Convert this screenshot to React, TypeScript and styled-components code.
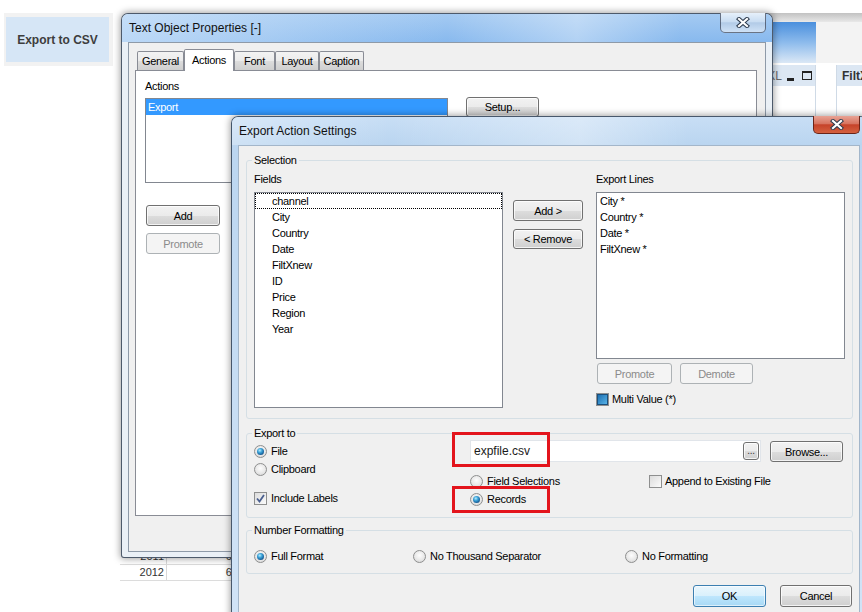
import React from "react";
import styled, { createGlobalStyle, css } from "styled-components";

const uiFont = `"Liberation Sans", Arial, sans-serif`;
const titleFont = `"Liberation Sans", Arial, sans-serif`;

const GlobalStyle = createGlobalStyle`
  * { box-sizing: border-box; }
  html, body { margin: 0; padding: 0; background: #ffffff; }
  body { font-family: ${titleFont}; }
`;

const Desktop = styled.div`
  position: relative;
  width: 862px;
  height: 612px;
  overflow: hidden;
  background: #ffffff;
  display: flex;
  flex-direction: column;
  align-items: flex-start;
`;

const CsvButtonFrame = styled.div`
  margin: 13px 0 0 4px;
  width: 109px;
  height: 53px;
  padding: 4px 4px 4px 2px;
  background: #f2f2f2;
`;

const CsvButton = styled.div`
  height: 100%;
  display: flex;
  align-items: center;
  justify-content: center;
  background: #d6e6f6;
  color: #3d3d3d;
  font: bold 12px ${titleFont};
`;

/* sheet objects of the app behind the dialogs, placed freely on the sheet */
const SheetObject = styled.div<{ $x: number; $y: number; $w: number; $h: number }>`
  position: absolute;
  left: ${(p) => p.$x}px;
  top: ${(p) => p.$y}px;
  width: ${(p) => p.$w}px;
  height: ${(p) => p.$h}px;
`;

const SheetTabs = styled(SheetObject)`
  background: linear-gradient(#c2c2c2, #e8e8e8);
`;

const BlueTile = styled(SheetObject)`
  background: linear-gradient(#4a8fdd, #8dbbec 50%, #dbe8f6);
`;

const PaleTile = styled(SheetObject)`
  background: #f3f3f3;
`;

const ChartBox = styled(SheetObject)`
  display: flex;
  flex-direction: column;
  border: 1px solid #cfdae6;
  border-top: none;
  background: #ffffff;
`;

const ChartCaption = styled.div<{ $align: "start" | "end" }>`
  height: 21px;
  display: flex;
  align-items: center;
  justify-content: ${(p) => (p.$align === "end" ? "flex-end" : "flex-start")};
  gap: 5px;
  padding: 0 3px 0 5px;
  background: #dce7f3;
  color: #6a6a6a;
  font: 12px ${titleFont};
`;

const CaptionTitle = styled.span`
  color: #333333;
  font-weight: bold;
`;

const MinimizeIcon = styled.span`
  width: 7px;
  height: 3px;
  margin-top: 7px;
  background: #222;
`;

const MaximizeIcon = styled.span`
  width: 10px;
  height: 9px;
  margin-left: 3px;
  border: 1px solid #222;
  border-top-width: 2px;
`;

const SheetTable = styled(SheetObject)`
  display: flex;
  flex-direction: column;
  font: 11px ${titleFont};
  color: #333333;
`;

const TableRow = styled.div`
  display: grid;
  grid-template-columns: 47px 73px;
  height: 16px;
  border-bottom: 1px solid #dcdcdc;
`;

const TableCell = styled.div`
  text-align: right;
  padding-right: 2px;
  line-height: 15px;
  &:first-child {
    border-right: 1px solid #d8d8d8;
  }
`;

/* windows */
const Window = styled.div<{ $x: number; $y: number; $w: number; $h: number; $z: number; $frame: string }>`
  position: absolute;
  left: ${(p) => p.$x}px;
  top: ${(p) => p.$y}px;
  width: ${(p) => p.$w}px;
  height: ${(p) => p.$h}px;
  z-index: ${(p) => p.$z};
  display: flex;
  flex-direction: column;
  padding: 0 6px 5px 6px;
  border: 1px solid rgba(38, 52, 72, 0.8);
  border-radius: 7px 7px 3px 3px;
  background: ${(p) => p.$frame};
  box-shadow: 0 0 7px 1px rgba(0, 0, 0, 0.36);
`;

const TitleBar = styled.div<{ $glass: string }>`
  flex: none;
  height: 28px;
  margin: 0 -6px;
  padding: 0 6px 0 7px;
  display: flex;
  align-items: center;
  background: ${(p) => p.$glass};
  border-radius: 6px 6px 0 0;
`;

const TitleText = styled.span`
  font: 12px ${titleFont};
  color: #111111;
`;

const CloseButton = styled.div<{ $tone: "glass" | "red"; $w: number; $h: number }>`
  margin: -1px 0 0 auto;
  align-self: flex-start;
  width: ${(p) => p.$w}px;
  height: ${(p) => p.$h}px;
  display: flex;
  align-items: center;
  justify-content: center;
  border: 1px solid rgba(40, 50, 70, 0.65);
  border-top: none;
  border-radius: 0 0 5px 5px;
  ${(p) =>
    p.$tone === "red"
      ? css`
          background: linear-gradient(#e8a395, #d77460 45%, #c6432a 52%, #d4603f 100%);
          border-color: #6a2418;
        `
      : css`
          background: linear-gradient(#e6f0fa, #c9ddf2 45%, #b2cbe7 52%, #cfe2f6 100%);
        `}
`;

const CloseGlyph = () => (
  <svg width="14" height="11" viewBox="0 0 14 11">
    <path d="M3 2 L11 9 M11 2 L3 9" stroke="#2c3a4d" strokeWidth="4.2" strokeLinecap="square" />
    <path d="M3 2 L11 9 M11 2 L3 9" stroke="#ffffff" strokeWidth="2.2" strokeLinecap="square" />
  </svg>
);

const Client = styled.div`
  flex: 1;
  min-height: 0;
  display: flex;
  flex-direction: column;
  background: #f0f0f0;
  border: 1px solid #8e9aa8;
  font: 11px ${uiFont};
  letter-spacing: -0.3px;
  color: #000000;
`;

const PropertiesClient = styled(Client)`
  padding: 6px 8px 0 6px;
`;

const ExportClient = styled(Client)`
  padding: 7px 6px 0 7px;
  border-color: #a3b6ca;
`;

/* tabs */
const TabStrip = styled.div`
  display: flex;
  align-items: flex-end;
  height: 21px;
  margin-left: 2px;
  position: relative;
  z-index: 1;
`;

const Tab = styled.div<{ $w: number; $active?: boolean }>`
  width: ${(p) => p.$w}px;
  height: ${(p) => (p.$active ? 22 : 19)}px;
  margin-bottom: ${(p) => (p.$active ? -1 : 0)}px;
  display: flex;
  align-items: center;
  justify-content: center;
  border: 1px solid #898c95;
  border-bottom: none;
  border-radius: 2px 2px 0 0;
  background: ${(p) =>
    p.$active ? "#ffffff" : "linear-gradient(#f3f3f3, #ebebeb 50%, #dddddd 51%, #cfcfcf)"};
  padding-bottom: ${(p) => (p.$active ? 2 : 0)}px;
`;

const TabPanel = styled.div`
  height: 446px;
  display: flex;
  flex-direction: column;
  align-items: flex-start;
  padding: 8px 9px;
  border: 1px solid #898c95;
  background: #ffffff;
`;

const FieldLabel = styled.div`
  line-height: 14px;
`;

const ActionsRow = styled.div`
  display: flex;
  align-items: flex-start;
  gap: 18px;
  margin-top: 5px;
`;

const ActionButtons = styled.div`
  display: flex;
  flex-direction: column;
  gap: 7px;
  margin: 22px 0 0 1px;
`;

/* controls */
const Button = styled.button<{ $w: number; $h?: number; $default?: boolean }>`
  flex: none;
  width: ${(p) => p.$w}px;
  height: ${(p) => p.$h ?? 21}px;
  padding: 0;
  font: 11px ${uiFont};
  letter-spacing: -0.3px;
  color: #000000;
  border: 1px solid #707070;
  border-radius: 3px;
  background: linear-gradient(#f2f2f2 0%, #ebebeb 50%, #dddddd 51%, #cfcfcf 100%);
  box-shadow: inset 0 0 0 1px rgba(255, 255, 255, 0.75);
  &:disabled {
    color: #8b8b8b;
    border-color: #adb2b5;
    background: #f4f4f4;
    box-shadow: none;
  }
  ${(p) =>
    p.$default &&
    css`
      border-color: #3c7fb1;
      background: linear-gradient(#eaf6fd 0%, #d9f0fc 50%, #bee6fd 51%, #a7d9f5 100%);
      box-shadow: inset 0 0 0 1px rgba(255, 255, 255, 0.6);
    `}
`;

const SetupButton = styled(Button)`
  margin-top: -1px;
`;

const ListBox = styled.div<{ $w: number; $h: number }>`
  flex: none;
  width: ${(p) => p.$w}px;
  height: ${(p) => p.$h}px;
  display: flex;
  flex-direction: column;
  border: 1px solid #828790;
  background: #ffffff;
`;

const ListItem = styled.div<{ $indent: number; $selected?: boolean; $focused?: boolean }>`
  height: 16px;
  line-height: 14px;
  padding-left: ${(p) => p.$indent}px;
  border: 1px ${(p) => (p.$focused ? "dotted #000000" : "solid transparent")};
  ${(p) =>
    p.$selected &&
    css`
      background: #3399ff;
      color: #ffffff;
    `}
`;

const GroupBox = styled.fieldset<{ $pad: string; $gap?: number }>`
  margin: ${(p) => p.$gap ?? 0}px 0 0 0;
  min-width: 0;
  padding: ${(p) => p.$pad};
  border: 1px solid #d5dfe5;
  border-radius: 3px;
`;

const GroupLegend = styled.legend`
  padding: 0 2px;
  margin-left: -2px;
  line-height: 14px;
`;

const SelectionBody = styled.div`
  display: flex;
  align-items: flex-start;
`;

const ListColumn = styled.div<{ $gap?: number }>`
  display: flex;
  flex-direction: column;
  gap: 6px;
  margin-left: ${(p) => p.$gap ?? 0}px;
`;

const MoveButtons = styled.div`
  display: flex;
  flex-direction: column;
  gap: 8px;
  margin-left: 10px;
  padding-top: 28px;
`;

const OrderButtons = styled.div`
  display: flex;
  gap: 8px;
  margin: -2px 0 0 1px;
`;

const OptionRow = styled.label<{ $space?: number; $gap?: number }>`
  display: flex;
  align-items: center;
  gap: ${(p) => p.$gap ?? 4}px;
  height: 18px;
  margin-top: ${(p) => p.$space ?? 0}px;
  white-space: nowrap;
`;

const Radio = styled.span<{ $checked?: boolean }>`
  flex: none;
  width: 13px;
  height: 13px;
  display: flex;
  align-items: center;
  justify-content: center;
  border: 1px solid #8e8f8f;
  border-radius: 50%;
  background: radial-gradient(circle at 50% 40%, #fdfdfd 0%, #e8e8e8 55%, #cfcfcf 100%);
  &::after {
    content: "";
    display: ${(p) => (p.$checked ? "block" : "none")};
    width: 7px;
    height: 7px;
    border-radius: 50%;
    background: radial-gradient(circle at 40% 35%, #b8ecfd 0%, #3aa2d8 35%, #13558f 75%, #0b3a66 100%);
  }
`;

const CheckBox = styled.span<{ $state?: "checked" | "mixed" }>`
  flex: none;
  width: 13px;
  height: 13px;
  display: flex;
  align-items: center;
  justify-content: center;
  border: 1px solid #8e8f8f;
  background: linear-gradient(135deg, #dcdcdc, #fbfbfb);
  ${(p) =>
    p.$state === "mixed" &&
    css`
      &::after {
        content: "";
        width: 9px;
        height: 9px;
        border: 1px solid #1b4f7c;
        background: linear-gradient(135deg, #1c6fb0, #58b3e8);
      }
    `}
`;

const CheckMark = () => (
  <svg width="9" height="9" viewBox="0 0 9 9">
    <path d="M1 4.5 L3.5 7.5 L8 1" stroke="#4a5f8f" strokeWidth="1.8" fill="none" />
  </svg>
);

const ExportBody = styled.div`
  display: flex;
  align-items: flex-start;
`;

const ExportTargets = styled.div`
  width: 216px;
  flex: none;
  display: flex;
  flex-direction: column;
  padding-top: 2px;
`;

const ExportFileColumn = styled.div`
  display: flex;
  flex-direction: column;
`;

const FileRow = styled.div`
  display: flex;
  align-items: flex-start;
  gap: 9px;
`;

const TextField = styled.div`
  width: 291px;
  height: 22px;
  display: flex;
  align-items: center;
  justify-content: space-between;
  padding: 0 1px 0 3px;
  border: 1px solid #e1e5ea;
  background: #ffffff;
  font: 12px ${titleFont};
  letter-spacing: 0;
  color: #1a1a1a;
`;

const EllipsisButton = styled(Button)`
  font-size: 10px;
  line-height: 8px;
  color: #333;
`;

const BrowseButton = styled(Button)`
  margin-top: 1px;
`;

const ModeRow = styled.div`
  display: flex;
  align-items: flex-start;
  margin-top: 10px;
`;

const ModeOptions = styled.div`
  width: 179px;
  display: flex;
  flex-direction: column;
`;

const FormatRow = styled.div`
  display: grid;
  grid-template-columns: 159px 212px auto;
`;

const DialogFooter = styled.div`
  display: flex;
  justify-content: flex-end;
  gap: 14px;
  margin-top: 11px;
  padding-right: 1px;
`;

const Highlight = styled.div<{ $x: number; $y: number; $w: number; $h: number }>`
  position: absolute;
  left: ${(p) => p.$x}px;
  top: ${(p) => p.$y}px;
  width: ${(p) => p.$w}px;
  height: ${(p) => p.$h}px;
  z-index: 5;
  border: 3px solid #e3141c;
`;

const blueGlass =
  "linear-gradient(90deg, rgba(210,230,250,0.7) 0%, rgba(210,230,250,0.2) 35%, rgba(255,255,255,0) 50%, rgba(255,255,255,0.35) 70%, rgba(255,255,255,0) 86%), linear-gradient(180deg, #a4caf2, #88b9ee)";
const paleGlass =
  "linear-gradient(90deg, rgba(255,255,255,0.3) 0%, rgba(255,255,255,0) 25%, rgba(255,255,255,0.35) 55%, rgba(255,255,255,0) 72%), linear-gradient(180deg, #c8def5, #bad5f0)";

const fields = ["channel", "City", "Country", "Date", "FiltXnew", "ID", "Price", "Region", "Year"];
const exportLines = ["City *", "Country *", "Date *", "FiltXnew *"];

export default function App() {
  return (
    <>
      <GlobalStyle />
      <Desktop>
        <CsvButtonFrame>
          <CsvButton>Export to CSV</CsvButton>
        </CsvButtonFrame>

        <SheetTabs $x={700} $y={13} $w={162} $h={9} />
        <BlueTile $x={700} $y={22} $w={116} $h={41} />
        <PaleTile $x={816} $y={22} $w={46} $h={41} />
        <ChartBox $x={700} $y={65} $w={116} $h={80}>
          <ChartCaption $align="end">
            <span>XL</span>
            <MinimizeIcon />
            <MaximizeIcon />
          </ChartCaption>
        </ChartBox>
        <ChartBox $x={836} $y={65} $w={80} $h={80}>
          <ChartCaption $align="start">
            <CaptionTitle>FiltXnew</CaptionTitle>
          </ChartCaption>
        </ChartBox>
        <SheetTable $x={120} $y={549} $w={120} $h={34}>
          <TableRow>
            <TableCell>2011</TableCell>
            <TableCell>60</TableCell>
          </TableRow>
          <TableRow>
            <TableCell>2012</TableCell>
            <TableCell>63</TableCell>
          </TableRow>
        </SheetTable>

        <Window $x={121} $y={13} $w={652} $h={545} $z={1} $frame="#eaf0f6">
          <TitleBar $glass={blueGlass}>
            <TitleText>Text Object Properties [-]</TitleText>
            <CloseButton $tone="glass" $w={46} $h={20}>
              <CloseGlyph />
            </CloseButton>
          </TitleBar>
          <PropertiesClient>
            <TabStrip>
              <Tab $w={47}>General</Tab>
              <Tab $w={50} $active>
                Actions
              </Tab>
              <Tab $w={41}>Font</Tab>
              <Tab $w={44}>Layout</Tab>
              <Tab $w={45}>Caption</Tab>
            </TabStrip>
            <TabPanel>
              <FieldLabel>Actions</FieldLabel>
              <ActionsRow>
                <ListBox $w={303} $h={85}>
                  <ListItem $indent={1} $selected>
                    Export
                  </ListItem>
                </ListBox>
                <SetupButton $w={73} $h={20}>
                  Setup...
                </SetupButton>
              </ActionsRow>
              <ActionButtons>
                <Button $w={74}>Add</Button>
                <Button $w={74} disabled>
                  Promote
                </Button>
              </ActionButtons>
            </TabPanel>
          </PropertiesClient>
        </Window>

        <Window $x={231} $y={116} $w={636} $h={520} $z={2} $frame="linear-gradient(180deg, #bad5f0, #d2e4f7)">
          <TitleBar $glass={paleGlass}>
            <TitleText>Export Action Settings</TitleText>
            <CloseButton $tone="red" $w={47} $h={18}>
              <CloseGlyph />
            </CloseButton>
          </TitleBar>
          <ExportClient>
            <GroupBox $pad="5px 6px 10px 7px">
              <GroupLegend>Selection</GroupLegend>
              <SelectionBody>
                <ListColumn>
                  <FieldLabel>Fields</FieldLabel>
                  <ListBox $w={249} $h={216}>
                    {fields.map((f, i) => (
                      <ListItem key={f} $indent={16} $focused={i === 0}>
                        {f}
                      </ListItem>
                    ))}
                  </ListBox>
                </ListColumn>
                <MoveButtons>
                  <Button $w={70}>Add &gt;</Button>
                  <Button $w={70} $h={20}>
                    &lt; Remove
                  </Button>
                </MoveButtons>
                <ListColumn $gap={13}>
                  <FieldLabel>Export Lines</FieldLabel>
                  <ListBox $w={249} $h={167}>
                    {exportLines.map((f) => (
                      <ListItem key={f} $indent={2}>
                        {f}
                      </ListItem>
                    ))}
                  </ListBox>
                  <OrderButtons>
                    <Button $w={75} disabled>
                      Promote
                    </Button>
                    <Button $w={73} disabled>
                      Demote
                    </Button>
                  </OrderButtons>
                  <OptionRow $space={0} $gap={3}>
                    <CheckBox $state="mixed" />
                    Multi Value (*)
                  </OptionRow>
                </ListColumn>
              </SelectionBody>
            </GroupBox>

            <GroupBox $pad="0 6px 9px 7px" $gap={7}>
              <GroupLegend>Export to</GroupLegend>
              <ExportBody>
                <ExportTargets>
                  <OptionRow>
                    <Radio $checked />
                    File
                  </OptionRow>
                  <OptionRow>
                    <Radio />
                    Clipboard
                  </OptionRow>
                  <OptionRow $space={11}>
                    <CheckBox $state="checked">
                      <CheckMark />
                    </CheckBox>
                    Include Labels
                  </OptionRow>
                </ExportTargets>
                <ExportFileColumn>
                  <FileRow>
                    <TextField>
                      <span>expfile.csv</span>
                      <EllipsisButton $w={16} $h={18}>
                        ...
                      </EllipsisButton>
                    </TextField>
                    <BrowseButton $w={73}>Browse...</BrowseButton>
                  </FileRow>
                  <ModeRow>
                    <ModeOptions>
                      <OptionRow>
                        <Radio />
                        Field Selections
                      </OptionRow>
                      <OptionRow>
                        <Radio $checked />
                        Records
                      </OptionRow>
                    </ModeOptions>
                    <OptionRow $gap={3}>
                      <CheckBox />
                      Append to Existing File
                    </OptionRow>
                  </ModeRow>
                </ExportFileColumn>
              </ExportBody>
            </GroupBox>

            <GroupBox $pad="10px 6px 8px 7px" $gap={5}>
              <GroupLegend>Number Formatting</GroupLegend>
              <FormatRow>
                <OptionRow>
                  <Radio $checked />
                  Full Format
                </OptionRow>
                <OptionRow>
                  <Radio />
                  No Thousand Separator
                </OptionRow>
                <OptionRow>
                  <Radio />
                  No Formatting
                </OptionRow>
              </FormatRow>
            </GroupBox>

            <DialogFooter>
              <Button $w={73} $h={22} $default>
                OK
              </Button>
              <Button $w={72} $h={22}>
                Cancel
              </Button>
            </DialogFooter>
          </ExportClient>
        </Window>

        <Highlight $x={452} $y={432} $w={98} $h={35} />
        <Highlight $x={452} $y={486} $w={98} $h={27} />
      </Desktop>
    </>
  );
}
